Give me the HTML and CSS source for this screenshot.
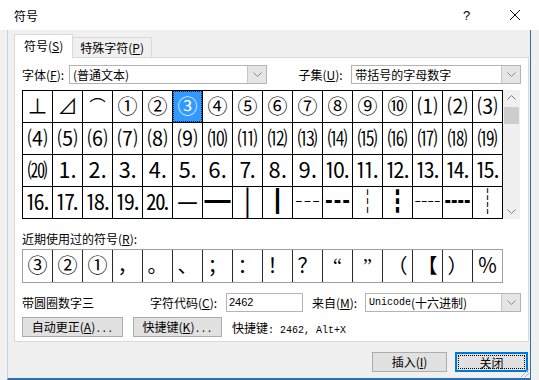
FILE: index.html
```html
<!DOCTYPE html>
<html lang="zh-CN">
<head>
    <meta charset="UTF-8">
    <title>符号</title>
    <link rel="stylesheet" href="styles.css">
</head>
<body>
<div class="dialog">
    <div class="titlebar">
        <span class="title">符号</span>
        <span class="help">?</span>
        <span class="close">
            <svg width="12" height="12" viewBox="0 0 12 12"><path d="M1 1L11 11M11 1L1 11" stroke="#111" stroke-width="1"/></svg>
        </span>
    </div>

    <div class="body">
        <div class="tabs">
            <div class="tab active">符号(<u>S</u>)</div>
            <div class="tab">特殊字符(<u>P</u>)</div>
        </div>

        <div class="panel">
            <div class="row font-row">
                <span class="lbl">字体(<u>F</u>):</span>
                <div class="combo font-combo">
                    <span class="combo-text">(普通文本)</span>
                    <span class="drop"><svg width="9" height="5" viewBox="0 0 9 5"><path d="M0.5 0.5L4.5 4.5L8.5 0.5" fill="none" stroke="#8a8a8a"/></svg></span>
                </div>
                <span class="lbl subset-lbl">子集(<u>U</u>):</span>
                <div class="combo subset-combo">
                    <span class="combo-text">带括号的字母数字</span>
                    <span class="drop"><svg width="9" height="5" viewBox="0 0 9 5"><path d="M0.5 0.5L4.5 4.5L8.5 0.5" fill="none" stroke="#8a8a8a"/></svg></span>
                </div>
            </div>

            <div class="grid-wrap">
                <div class="grid">
                    <span>⊥</span><span>⊿</span><span class="arc">⌒</span><span>①</span><span>②</span><span class="sel">③</span><span>④</span><span>⑤</span><span>⑥</span><span>⑦</span><span>⑧</span><span>⑨</span><span>⑩</span><span>⑴</span><span>⑵</span><span>⑶</span>
                    <span>⑷</span><span>⑸</span><span>⑹</span><span>⑺</span><span>⑻</span><span>⑼</span><span>⑽</span><span>⑾</span><span>⑿</span><span>⒀</span><span>⒁</span><span>⒂</span><span>⒃</span><span>⒄</span><span>⒅</span><span>⒆</span>
                    <span>⒇</span><span class="dot">⒈</span><span class="dot">⒉</span><span class="dot">⒊</span><span class="dot">⒋</span><span class="dot">⒌</span><span class="dot">⒍</span><span class="dot">⒎</span><span class="dot">⒏</span><span class="dot">⒐</span><span class="dot">⒑</span><span class="dot">⒒</span><span class="dot">⒓</span><span class="dot">⒔</span><span class="dot">⒕</span><span class="dot">⒖</span>
                    <span class="dot">⒗</span><span class="dot">⒘</span><span class="dot">⒙</span><span class="dot">⒚</span><span class="dot">⒛</span><span class="box">─</span><span class="box">━</span><span class="box">│</span><span class="box">┃</span><span class="box">┄</span><span class="box">┅</span><span class="box">┆</span><span class="box">┇</span><span class="box">┈</span><span class="box">┉</span><span class="box">┊</span>
                </div>
                <div class="scrollbar">
                    <span class="arrow"><svg width="9" height="5" viewBox="0 0 9 5"><path d="M0.5 4.5L4.5 0.5L8.5 4.5" fill="none" stroke="#7a7a7a"/></svg></span>
                    <span class="thumb"></span>
                    <span class="track"></span>
                    <span class="arrow"><svg width="9" height="5" viewBox="0 0 9 5"><path d="M0.5 0.5L4.5 4.5L8.5 0.5" fill="none" stroke="#7a7a7a"/></svg></span>
                </div>
            </div>

            <div class="recent-lbl">近期使用过的符号(<u>R</u>):</div>
            <div class="recent">
                <span>③</span><span>②</span><span>①</span><span>，</span><span>。</span><span>、</span><span>；</span><span>：</span><span>！</span><span>？</span><span>“</span><span>”</span><span>（</span><span>【</span><span>）</span><span>％</span>
            </div>

            <div class="row info-row">
                <span class="char-name">带圆圈数字三</span>
                <span class="lbl code-lbl">字符代码(<u>C</u>):</span>
                <div class="input code-input">2462</div>
                <span class="lbl from-lbl">来自(<u>M</u>):</span>
                <div class="combo from-combo">
                    <span class="combo-text mono">Unicode</span><span class="combo-text">(十六进制)</span>
                    <span class="drop"><svg width="9" height="5" viewBox="0 0 9 5"><path d="M0.5 0.5L4.5 4.5L8.5 0.5" fill="none" stroke="#8a8a8a"/></svg></span>
                </div>
            </div>

            <div class="row btn-row">
                <button class="btn autocorrect">自动更正(<u>A</u>)<span class="mono">...</span></button>
                <button class="btn shortcut">快捷键(<u>K</u>)<span class="mono">...</span></button>
                <span class="shortcut-text">快捷键<span class="mono">: 2462, Alt+X</span></span>
            </div>
        </div>

        <div class="footer">
            <button class="btn insert">插入(<u>I</u>)</button>
            <button class="btn close-btn"><span class="focus">关闭</span></button>
            <svg class="grip" width="12" height="12" viewBox="0 0 12 12">
                <path d="M11 3L3 11M11 7L7 11" stroke="#b8b8b8" stroke-width="1"/>
            </svg>
        </div>
    </div>
</div>
</body>
</html>
```

FILE: styles.css
```css
* {
    box-sizing: border-box;
}
body {
    margin: 0;
    width: 539px;
    height: 380px;
    overflow: hidden;
    background: #f0f0f0;
    font-family: "Noto Sans CJK SC", "Liberation Sans", sans-serif;
    font-size: 12px;
    color: #000;
}
u {
    text-decoration: underline;
    text-underline-offset: 1px;
}
.mono {
    font-family: "Liberation Mono", "Noto Sans CJK SC", monospace;
    font-size: 10px;
}
.dialog {
    width: 539px;
    height: 380px;
    position: relative;
}
.titlebar {
    height: 30px;
    background: #fff;
    display: flex;
    align-items: center;
    padding-left: 14px;
}
.title {
    flex: 1;
    font-size: 12px;
}
.help {
    width: 46px;
    font-size: 13px;
    font-family: "Liberation Sans", sans-serif;
}
.close {
    width: 30px;
    display: flex;
    align-items: center;
}
.body {
    height: 350px;
    border-left: 1px solid #c8d2dd;
    border-bottom: 2px solid #2d6fb0;
    margin-left: 7px;
    width: 524px;
    border-right: 1px solid #2d6fb0;
    padding-left: 6px;
    position: relative;
}

/* tabs */
.tabs {
    display: flex;
    align-items: flex-end;
    height: 27px;
    padding-top: 4px;
}
.tab {
    height: 20px;
    padding: 0 7px;
    border: 1px solid #d9d9d9;
    border-bottom: none;
    background: #f0f0f0;
    line-height: 19px;
    margin-left: -1px;
    white-space: nowrap;
}
.tab.active {
    height: 24px;
    background: #fff;
    margin-left: 0;
    margin-bottom: -1px;
    padding: 0 9px;
    line-height: 22px;
    position: relative;
    z-index: 1;
}
.panel {
    width: 515px;
    height: 285px;
    background: #fff;
    border: 1px solid #d9d9d9;
    padding: 7px 7px 0 7px;
}
.row {
    display: flex;
    align-items: center;
}
.font-row {
    height: 19px;
}
.lbl {
    white-space: nowrap;
}
.combo {
    display: flex;
    align-items: center;
    height: 19px;
    border: 1px solid #b4b4b4;
    background: #fff;
    padding-left: 3px;
}
.combo-text {
    flex: none;
}
.drop {
    margin-left: auto;
    width: 19px;
    height: 17px;
    background: #e5e5e5;
    border-left: 1px solid #c6c6c6;
    display: flex;
    align-items: center;
    justify-content: center;
}
.font-row .lbl:first-child {
    width: 47px;
}
.font-combo {
    width: 199px;
}
.subset-lbl {
    margin-left: 31px;
    width: 53px;
}
.subset-combo {
    width: 170px;
}

/* symbol grid */
.grid-wrap {
    display: flex;
    margin-top: 6px;
    height: 129px;
}
.grid {
    display: grid;
    grid-template-columns: repeat(16, 29px);
    grid-template-rows: repeat(4, 31px);
    gap: 1px;
    padding: 1px;
    background: #000;
    width: 481px;
}
.grid span, .recent span {
    background: #fff;
    display: flex;
    align-items: center;
    justify-content: center;
    font-family: "Liberation Serif", "Noto Sans CJK SC", serif;
    font-size: 20px;
    line-height: 1;
    overflow: hidden;
}
.grid span.dot {
    font-size: 22px;
}
.grid span.arc {
    font-size: 16px;
}
.grid span.box {
    font-size: 26px;
}
.grid span.sel {
    background: #3399ff;
    color: #fff;
    outline: 1px dotted #0a246a;
    outline-offset: -1px;
}
.scrollbar {
    width: 17px;
    background: #f0f0f0;
    display: flex;
    flex-direction: column;
    align-items: center;
}
.arrow {
    height: 15px;
    display: flex;
    align-items: center;
    justify-content: center;
}
.thumb {
    width: 15px;
    height: 17px;
    background: #cdcdcd;
    margin-top: 2px;
}
.track {
    flex: 1;
}

/* recent symbols */
.recent-lbl {
    margin-top: 11px;
    height: 17px;
    line-height: 17px;
}
.recent {
    margin-top: 2px;
    display: grid;
    grid-template-columns: repeat(16, 29px);
    grid-template-rows: 32px;
    gap: 1px;
    width: 481px;
    background: #2a2a2a;
    border: 1px solid #a0a0a0;
}

/* character info */
.info-row {
    margin-top: 10px;
    height: 19px;
}
.char-name {
    width: 128px;
}
.code-lbl {
    width: 76px;
}
.input {
    width: 77px;
    height: 19px;
    border: 1px solid #b4b4b4;
    padding-left: 2px;
    font-family: "Liberation Sans", sans-serif;
    font-size: 11px;
    line-height: 17px;
}
.from-lbl {
    margin-left: 9px;
    width: 53px;
}
.from-combo {
    width: 156px;
}
.from-combo .mono {
    font-size: 10px;
}

/* buttons */
.btn-row {
    margin-top: 5px;
    height: 20px;
}
.btn {
    height: 20px;
    padding: 0;
    background: #e1e1e1;
    border: 1px solid #adadad;
    font-family: "Noto Sans CJK SC", sans-serif;
    font-size: 12px;
    color: #000;
    line-height: 18px;
}
.autocorrect {
    width: 101px;
}
.shortcut {
    width: 89px;
    margin-left: 10px;
}
.shortcut-text {
    margin-left: 10px;
}
.footer {
    display: flex;
    justify-content: flex-end;
    padding-right: 2px;
    margin-top: 10px;
}
.insert {
    width: 75px;
}
.close-btn {
    width: 73px;
    margin-left: 8px;
    border: 1px solid #0078d7;
    box-shadow: inset 0 0 0 1px #0078d7;
    padding: 2px;
}
.focus {
    display: block;
    height: 14px;
    line-height: 13px;
    border: 1px dotted #000;
}
.grip {
    position: absolute;
    right: 0;
    bottom: 0;
}
```
